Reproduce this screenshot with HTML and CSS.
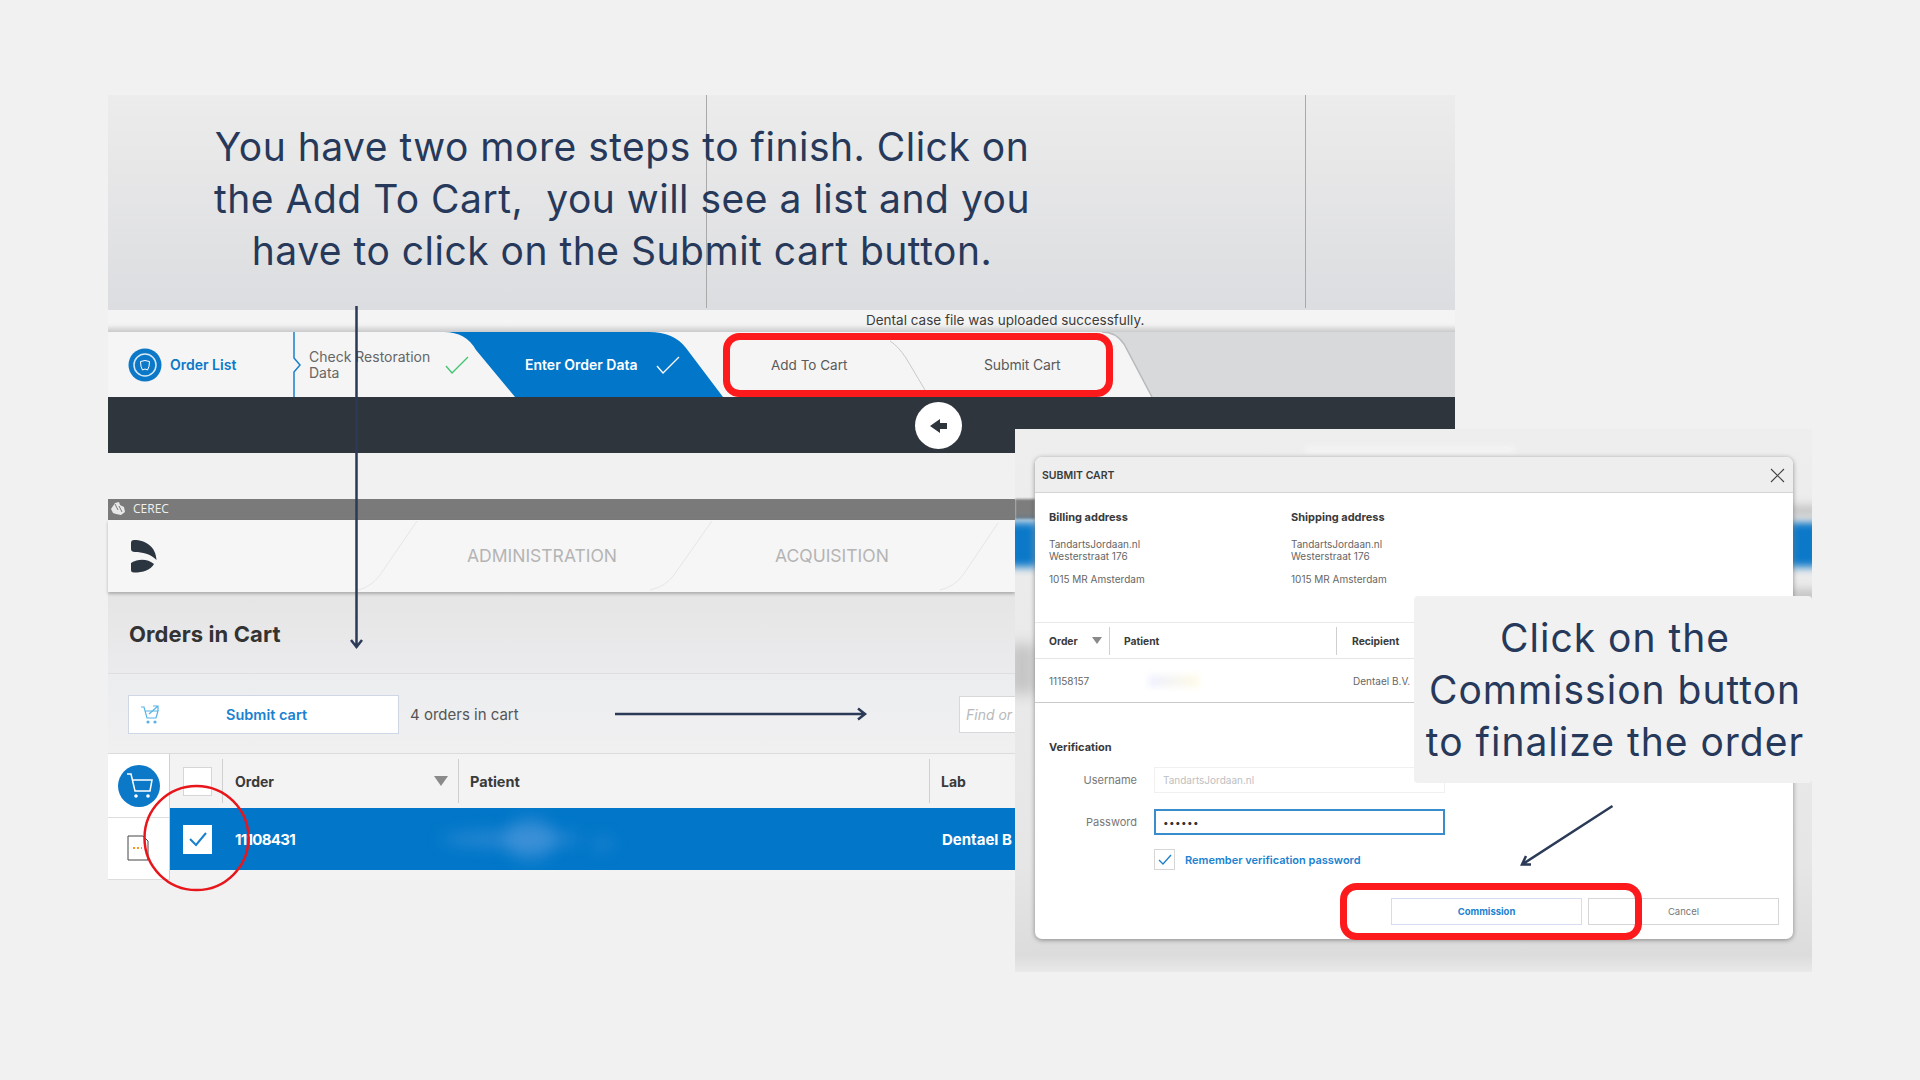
FILE: index.html
```html
<!DOCTYPE html>
<html lang="en">
<head>
<meta charset="utf-8">
<title>Submit cart steps</title>
<link rel="stylesheet" href="styles.css">
</head>
<body>
<main class="slide">

  <section class="shot-top">
    <div class="hero"><div class="hero-cell"></div><div class="hero-cell"></div></div>
    <div class="band"><span class="toast">Dental case file was uploaded successfully.</span></div>
    <div class="steps">
      <svg class="steps-bg" width="1347" height="65" viewBox="0 0 1347 65">
        <path d="M0 0H994Q1008 0 1016 12L1044 65H0Z" fill="#f5f5f5"/>
        <path d="M994 0Q1008 0 1016 12L1044 65" fill="none" stroke="#b9babc" stroke-width="1.5"/>
        <path d="M336 0Q358 0 368 18L407 65H615L578 16Q566 0 541 0Z" fill="#0277c9"/>
        <path d="M782 9Q790 14 798 26L817 58" fill="none" stroke="#c8c9cb" stroke-width="1"/>
        <path d="M186 0V26L192 33L186 40V65" fill="none" stroke="#1a7fcc" stroke-width="1.5"/>
      </svg>
      <div class="step step-list">
        <svg class="step-logo" width="34" height="34" viewBox="0 0 34 34">
          <circle cx="17" cy="17" r="16.500" fill="#0b78c8"/>
          <circle cx="17" cy="17" r="11" fill="none" stroke="#d5e9f7" stroke-width="1.500"/>
          <circle cx="17" cy="17" r="8" fill="#0b78c8" stroke="#0b78c8"/>
          <path d="M12.500 13.500Q17 11.500 21.500 13.500Q21.500 19 19.500 22Q17 20 14.500 22Q12.500 19 12.500 13.500Z" fill="none" stroke="#fff" stroke-width="1"/>
        </svg>
        <span class="step-link">Order List</span>
      </div>
      <div class="step step-check">
        <span class="step-text">Check Restoration<br>Data</span>
        <svg width="24" height="18" viewBox="0 0 24 18"><path d="M1 10L7 17L23 1" fill="none" stroke="#3fc46f" stroke-width="1.300"/></svg>
      </div>
      <div class="step step-enter">
        <span class="step-strong">Enter Order Data</span>
        <svg width="24" height="18" viewBox="0 0 24 18"><path d="M1 10L7 17L23 1" fill="none" stroke="#fff" stroke-width="1.300"/></svg>
      </div>
      <div class="step step-add">Add To Cart</div>
      <div class="step step-submit">Submit Cart</div>
    </div>
    <div class="dark-bar">
      <button class="back-btn" type="button" aria-label="Back">
        <svg width="18" height="16" viewBox="0 0 18 16"><path d="M0 8L10 1V5H17V11H10V15Z" fill="#2e353d"/></svg>
      </button>
    </div>
  </section>

  <section class="shot-cart">
    <div class="titlebar">
      <svg width="16" height="15" viewBox="0 0 16 15"><path d="M1 8L5 2L9 1L10 4L14 6L15 11L11 14L6 13L3 12Z" fill="#e8e8e8"/><path d="M5 3L8 9M9 5L12 11" stroke="#7a7a7a" stroke-width="1"/></svg>
      <span>CEREC</span>
    </div>
    <nav class="topnav">
      <svg class="nav-lines" width="907" height="72" viewBox="0 0 907 72">
        <g fill="none" stroke="#e6e6e6" stroke-width="1">
          <path d="M309 1L272 55Q263 67 250 70"/>
          <path d="M604 1L566 55Q557 67 542 70"/>
          <path d="M890 3L855 55Q846 67 832 70"/>
        </g>
      </svg>
      <svg class="brand" width="26" height="33" viewBox="0 0 26 33"><path d="M0 3Q0 0 3 0C15 0 25 7 25.500 20C20 14 11 12 4 12Q0 12 0 9Z" fill="#2a3540"/><path d="M0 23C8 18 17 19 23 24C20 30 12 32.500 3 32.500Q0 32.500 0 30Z" fill="#2a3540"/></svg>
      <span class="nav-item nav-admin">ADMINISTRATION</span>
      <span class="nav-item nav-acq">ACQUISITION</span>
    </nav>
    <header class="cart-head"><h1>Orders in Cart</h1></header>
    <div class="toolbar">
      <button class="submit-btn" type="button">
        <svg width="20" height="20" viewBox="0 0 20 20"><path d="M1 2H4L7 13H16L18 6H5" fill="none" stroke="#59b4e6" stroke-width="1.200"/><path d="M9 9L18 1M13 1H18V6" fill="none" stroke="#59b4e6" stroke-width="1.200"/><circle cx="8" cy="17" r="1.600" fill="#59b4e6"/><circle cx="15" cy="17" r="1.600" fill="#59b4e6"/></svg>
        <span>Submit cart</span>
      </button>
      <span class="count">4 orders in cart</span>
      <div class="find"><span>Find or</span></div>
    </div>
    <div class="table-head">
      <div class="side side-head">
        <svg width="42" height="42" viewBox="0 0 42 42"><circle cx="21" cy="21" r="21" fill="#0b78c8"/><path d="M9 9H13L17 26H32L34 15H14" fill="none" stroke="#fff" stroke-width="1.500"/><circle cx="18" cy="31" r="1.800" fill="#fff"/><circle cx="30" cy="31" r="1.800" fill="#fff"/></svg>
      </div>
      <div class="col col-check"><span class="checkbox"></span></div>
      <div class="col col-order">Order<span class="sort"></span></div>
      <div class="col col-patient">Patient</div>
      <div class="col col-lab">Lab</div>
    </div>
    <div class="table-row">
      <div class="side side-row">
        <svg width="22" height="27" viewBox="0 0 22 27"><path d="M1 2H16L21 7V26H1Z" fill="#fff" stroke="#444" stroke-width="1"/><path d="M6 14H15" stroke="#f39a1f" stroke-width="2" stroke-dasharray="2 2"/></svg>
      </div>
      <div class="row-main">
        <span class="checkbox checkbox-on"><svg width="20" height="16" viewBox="0 0 20 16"><path d="M2 8L8 14L18 2" fill="none" stroke="#1a7fcc" stroke-width="2"/></svg></span>
        <span class="row-id">11108431</span>
        <span class="row-blur row-blur-a"></span>
        <span class="row-blur row-blur-b"></span>
        <span class="row-blur row-blur-c"></span>
        <span class="row-lab">Dentael B</span>
      </div>
    </div>
    <div class="table-foot"><div class="side side-foot"></div></div>
  </section>

  <section class="shot-dialog">
    <span class="blur-white"></span>
    <span class="blur-title"></span>
    <span class="blur-strip blur-left"></span>
    <span class="blur-strip blur-right"></span>
    <span class="blur-gray blur-gray-a"></span>
    <span class="blur-gray blur-gray-b"></span>
    <span class="blur-gray blur-gray-c"></span>
    <div class="dialog">
      <div class="dlg-title"><span>SUBMIT CART</span>
        <svg width="15" height="15" viewBox="0 0 15 15"><path d="M1 1L14 14M14 1L1 14" stroke="#444" stroke-width="1.100"/></svg>
      </div>
      <div class="addresses">
        <address><strong>Billing address</strong><span>TandartsJordaan.nl<br>Westerstraat 176<br><br>1015 MR Amsterdam</span></address>
        <address><strong>Shipping address</strong><span>TandartsJordaan.nl<br>Westerstraat 176<br><br>1015 MR Amsterdam</span></address>
      </div>
      <div class="dlg-head">
        <div class="dh dh-order">Order<span class="sort sort-sm"></span></div>
        <div class="dh dh-patient">Patient</div>
        <div class="dh dh-rec">Recipient</div>
      </div>
      <div class="dlg-row">
        <span class="dr-order">11158157</span>
        <span class="dr-patient"></span>
        <span class="dr-rec">Dentael B.V.</span>
      </div>
      <h2 class="verify">Verification</h2>
      <div class="field"><label>Username</label><div class="input input-off">TandartsJordaan.nl</div></div>
      <div class="field field-pw"><label>Password</label><div class="input input-on">••••••</div></div>
      <div class="remember">
        <span class="checkbox-sm"><svg width="14" height="12" viewBox="0 0 14 12"><path d="M1 6L5 10L13 1" fill="none" stroke="#1a7fcc" stroke-width="1.300"/></svg></span>
        <span>Remember verification password</span>
      </div>
      <div class="actions">
        <button class="dlg-btn dlg-primary" type="button">Commission</button>
        <button class="dlg-btn" type="button">Cancel</button>
      </div>
    </div>
  </section>

  <p class="callout-main">You have two more steps to finish. Click on<br>the Add To Cart,&nbsp; you will see a list and you<br>have to click on the Submit cart button.</p>
  <p class="callout-side">Click on the<br>Commission button<br>to finalize the order</p>

  <svg class="marks" width="1920" height="1080" viewBox="0 0 1920 1080" aria-hidden="true">
    <rect x="726.500" y="336.500" width="383" height="57" rx="13" fill="none" stroke="#fd1a1c" stroke-width="7"/>
    <rect x="1343.500" y="886.500" width="295" height="50" rx="13" fill="none" stroke="#fd1a1c" stroke-width="7"/>
    <circle cx="196.500" cy="838" r="52" fill="none" stroke="#e8161b" stroke-width="2.500"/>
    <g fill="none" stroke="#2a3a57" stroke-width="2.500">
      <path d="M356.500 306V647M351 640L356.500 647L362 640"/>
      <path d="M615 714H865M858 708.500L865 714L858 719.500"/>
      <path d="M1612.500 806L1522 864.500M1531 864.500L1522 864.500L1526 856"/>
    </g>
  </svg>
</main>
</body>
</html>
```
FILE: styles.css
```css
* { box-sizing: border-box; }
html, body { margin: 0; padding: 0; }
body {
  width: 1920px;
  height: 1080px;
  overflow: hidden;
  background: #f1f1f1;
  font-family: Inter, "Liberation Sans", sans-serif;
  color: #333;
}
.slide { position: relative; width: 1920px; height: 1080px; }

/* top screenshot */
.shot-top {
  position: absolute;
  left: 108px;
  top: 95px;
  width: 1347px;
  display: flex;
  flex-direction: column;
}
.hero {
  height: 215px;
  display: flex;
  background: linear-gradient(#ececec, #dcdde0);
}
.hero-cell {
  width: 599px;
  height: 213px;
  border-right: 1px solid #a9a9a9;
}
.band {
  height: 22px;
  position: relative;
  background: linear-gradient(#f4f4f4 0 58%, #efefef 70%, #c9cacb 100%);
}
.toast {
  position: absolute;
  left: 758px;
  top: 1px;
  font-size: 13.500px;
  line-height: 18px;
  color: #3c3c3c;
  white-space: nowrap;
}
.steps {
  position: relative;
  height: 65px;
  display: flex;
  align-items: center;
  background: #d8d9db;
  font-size: 13.500px;
}
.steps-bg { position: absolute; left: 0; top: 0; }
.step { position: relative; display: flex; align-items: center; height: 100%; white-space: nowrap; }
.step-list { width: 186px; padding-left: 20px; gap: 8px; }
.step-logo { flex: none; }
.step-link { color: #0b78c8; font-weight: 600; font-size: 14px; }
.step-check { width: 221px; padding-left: 15px; gap: 15px; color: #666; }
.step-text { line-height: 16px; font-size: 14px; }
.step-enter { width: 256px; padding-left: 10px; gap: 11px; }
.step-strong { color: #fff; font-weight: 600; font-size: 14px; width: 120px; }
.step-add { width: 213px; color: #5a5a5a; }
.step-submit { color: #5a5a5a; font-size: 14px; letter-spacing: -.15px; }
.dark-bar {
  height: 56px;
  background: #2e353d;
  display: flex;
  padding: 5px 0 0 807px;
}
.back-btn {
  width: 47px;
  height: 47px;
  padding: 0;
  border: 0;
  border-radius: 50%;
  background: #fff;
  display: flex;
  align-items: center;
  justify-content: center;
}

/* cart screenshot */
.shot-cart {
  position: absolute;
  left: 108px;
  top: 499px;
  width: 907px;
  display: flex;
  flex-direction: column;
  isolation: isolate;
}
.titlebar {
  height: 21px;
  background: #7a7a7a;
  display: flex;
  align-items: center;
  gap: 7px;
  padding: 0 0 2px 2px;
  color: #f0f0f0;
  font-size: 12px;
  font-family: "Open Sans", sans-serif;
}
.topnav {
  height: 72px;
  position: relative;
  background: #f6f6f6;
  box-shadow: 0 2px 3px rgba(0,0,0,.25);
  z-index: 1;
  display: flex;
  align-items: center;
  padding-left: 23px;
}
.nav-lines { position: absolute; left: 0; top: 0; }
.brand { position: relative; }
.nav-item { position: absolute; top: 26px; font-size: 17.500px; line-height: 20px; color: #b4b4b4; white-space: nowrap; }
.nav-admin { left: 359px; }
.nav-acq { left: 667px; }
.cart-head {
  height: 82px;
  background: linear-gradient(#e5e5e6, #ebebed);
  border-bottom: 1px solid #dfdfe0;
  display: flex;
  align-items: center;
  padding: 2px 0 0 21px;
}
.cart-head h1 { margin: 0; font-size: 22px; font-weight: 700; color: #333; letter-spacing: .1px; }
.toolbar {
  height: 80px;
  background: linear-gradient(#ecedef, #f0f0f1);
  border-bottom: 1px solid #dcdcdc;
  display: flex;
  align-items: center;
  padding: 2px 0 0 20px;
}
.submit-btn {
  width: 271px;
  height: 39px;
  background: #fff;
  border: 1px solid #cfd6e6;
  display: flex;
  align-items: center;
  padding: 0 0 0 11px;
  font: 600 14.500px Inter, sans-serif;
  color: #1a82d0;
}
.submit-btn span { margin-left: 66px; }
.count { margin-left: 11px; font-size: 15px; color: #555; white-space: nowrap; width: 440px; }
.find {
  margin-left: 109px;
  flex: 1;
  height: 37px;
  background: #fff;
  border: 1px solid #d8d8d8;
  border-right: 0;
  padding-left: 6px;
  font-size: 14px;
  font-style: italic;
  line-height: 35px;
  color: #b9b9b9;
  white-space: nowrap;
}
.table-head {
  height: 54px;
  background: #f3f3f3;
  display: flex;
  align-items: stretch;
  font-size: 14px;
  font-weight: 700;
  color: #3a3a3a;
}
.side {
  width: 62px;
  flex: none;
  background: #fff;
  border-right: 1px solid #d0d0d0;
  display: flex;
  align-items: center;
  justify-content: center;
}
.side-head { padding-top: 10px; overflow: visible; }
.col { position: relative; display: flex; align-items: center; }
.col-check { width: 53px; padding-left: 13px; border-right: 1px solid #cfcfcf; margin: 5px 0; }
.col-order { width: 236px; padding-left: 12px; border-right: 1px solid #cfcfcf; margin: 5px 0; }
.col-patient { width: 471px; padding-left: 11px; border-right: 1px solid #cfcfcf; margin: 5px 0; font-size: 14.500px; }
.col-lab { padding-left: 11px; }
.checkbox {
  width: 29px;
  height: 29px;
  flex: none;
  background: #fff;
  border: 1px solid #d6d6d6;
  display: flex;
  align-items: center;
  justify-content: center;
}
.sort {
  position: absolute;
  right: 10px;
  top: 17px;
  border-left: 7.500px solid transparent;
  border-right: 7.500px solid transparent;
  border-top: 10px solid #8a8a8a;
}
.table-row { height: 62px; display: flex; }
.side-row { position: relative; align-items: flex-end; padding: 0 1px 9px 0; }
.side-row::before {
  content: "";
  position: absolute;
  left: 0;
  right: 0;
  top: 9px;
  height: 1px;
  background: #ddd;
}
.row-main {
  position: relative;
  flex: 1;
  background: #0277c9;
  display: flex;
  align-items: center;
  padding-left: 13px;
  color: #fff;
  font-size: 15px;
  font-weight: 700;
  overflow: hidden;
}
.checkbox-on { border: 0; }
.row-id { margin-left: 23px; letter-spacing: -.7px; }
.row-lab { position: absolute; left: 772px; white-space: nowrap; }
.row-blur { position: absolute; background: rgba(95,160,225,.45); filter: blur(8px); border-radius: 50%; }
.row-blur-a { left: 272px; top: 24px; width: 140px; height: 14px; }
.row-blur-b { left: 335px; top: 10px; width: 50px; height: 42px; }
.row-blur-c { left: 420px; top: 30px; width: 24px; height: 12px; background: rgba(95,160,225,.3); }
.table-foot { height: 10px; background: #f3f3f3; }
.side-foot { height: 10px; border-bottom: 1px solid #ddd; background: #fff; }

/* dialog screenshot */
.shot-dialog {
  position: absolute;
  left: 1015px;
  top: 429px;
  width: 797px;
  height: 543px;
  padding: 28px 19px 0 20px;
  background: linear-gradient(#eeeeee, #e6e6e7 80%, #dcdcdd 97%, #e9e9e9);
  overflow: hidden;
}
.blur-white { position: absolute; left: 290px; top: 18px; width: 210px; height: 5px; background: #f7f7f7; filter: blur(3px); }
.blur-title { position: absolute; left: 0; top: 70px; width: 20px; height: 20px; background: #7d7d7d; filter: blur(1px); }
.blur-strip { position: absolute; top: 93px; width: 30px; height: 45px; background: #0b78c8; filter: blur(4px); }
.blur-left { left: -8px; }
.blur-right { right: -8px; }
.blur-gray { position: absolute; width: 30px; height: 26px; background: #c6c6c6; filter: blur(7px); }
.blur-gray-a { left: -8px; top: 215px; height: 50px; }
.blur-gray-b { right: -8px; top: 76px; height: 12px; filter: blur(4px); }
.blur-gray-c { right: -8px; top: 160px; height: 14px; filter: blur(4px); }
.dialog {
  position: relative;
  width: 758px;
  height: 482px;
  background: #fff;
  border-radius: 7px;
  box-shadow: 0 1px 5px rgba(0,0,0,.4);
  overflow: hidden;
  font-size: 10px;
}
.dlg-title {
  height: 36px;
  background: #eeeeee;
  border-bottom: 1px solid #d4d4d4;
  display: flex;
  align-items: center;
  justify-content: space-between;
  padding: 1px 8px 0 7px;
  font-size: 10.500px;
  font-weight: 600;
  color: #3a3a3a;
}
.addresses { display: flex; height: 129px; padding: 19px 0 0 14px; }
.addresses address { width: 242px; font-style: normal; color: #666; line-height: 11.800px; }
.addresses strong { display: block; margin-bottom: 15px; font-size: 11px; font-weight: 700; color: #3a3a3a; }
.dlg-head {
  display: flex;
  height: 37px;
  align-items: center;
  border-top: 1px solid #e9e9e9;
  border-bottom: 1px solid #e6e6e6;
  font-weight: 700;
  color: #3a3a3a;
  font-size: 10.300px;
}
.dh { position: relative; height: 28px; display: flex; align-items: center; }
.dh-order { width: 75px; padding-left: 14px; border-right: 1px solid #cfcfcf; }
.dh-patient { width: 227px; padding-left: 14px; border-right: 1px solid #cfcfcf; }
.dh-rec { padding-left: 15px; }
.sort-sm { right: 7px; top: 10px; border-left-width: 5px; border-right-width: 5px; border-top-width: 7px; }
.dlg-row {
  height: 44px;
  border-bottom: 1px solid #c9c9c9;
  display: flex;
  align-items: center;
  color: #666;
  padding-left: 14px;
}
.dr-order { width: 100px; }
.dr-patient {
  width: 50px;
  height: 12px;
  margin-right: 154px;
  background: linear-gradient(90deg, #eef0ff, #fffbe6);
  filter: blur(3px);
}
.dr-rec { white-space: nowrap; }
.verify { margin: 37px 0 0 14px; font-size: 11px; line-height: 14px; font-weight: 700; color: #3a3a3a; }
.field { display: flex; align-items: center; margin-top: 13px; height: 26px; }
.field label { width: 102px; text-align: right; color: #777; font-size: 11px; }
.field-pw { margin-top: 16px; }
.input { margin-left: 17px; width: 291px; height: 100%; padding-left: 8px; display: flex; align-items: center; }
.input-off { border: 1px solid #f0f0f0; color: #c0c0c0; }
.input-on { border: 2px solid #3b8ccb; color: #333; letter-spacing: .4px; padding-left: 7px; }
.remember {
  display: flex;
  align-items: center;
  gap: 10px;
  margin: 14px 0 0 119px;
  font-size: 11px;
  font-weight: 600;
  color: #1a82d0;
}
.checkbox-sm {
  width: 21px;
  height: 21px;
  border: 1px solid #d6d6d6;
  display: flex;
  align-items: center;
  justify-content: center;
}
.actions { display: flex; gap: 6px; margin: 28px 0 0 356px; }
.dlg-btn {
  width: 191px;
  height: 27px;
  padding: 0;
  background: #fff;
  border: 1px solid #d6d6d6;
  font: 400 9.500px Inter, sans-serif;
  color: #777;
}
.dlg-primary { border-color: #d5dcf0; color: #1a82d0; font-weight: 700; }

/* captions and marks */
.callout-main {
  position: absolute;
  left: 108px;
  top: 121px;
  width: 1028px;
  margin: 0;
  text-align: center;
  font-size: 39px;
  letter-spacing: .5px;
  line-height: 52px;
  color: #27395a;
  white-space: nowrap;
}
.callout-side {
  position: absolute;
  left: 1414px;
  top: 596px;
  width: 398px;
  height: 187px;
  margin: 0;
  padding: 16px 0 0 4px;
  border-radius: 4px;
  background: #f1f1f1;
  text-align: center;
  font-size: 39px;
  letter-spacing: 1px;
  line-height: 52px;
  color: #27395a;
  white-space: nowrap;
}
.marks { position: absolute; left: 0; top: 0; pointer-events: none; }
```
